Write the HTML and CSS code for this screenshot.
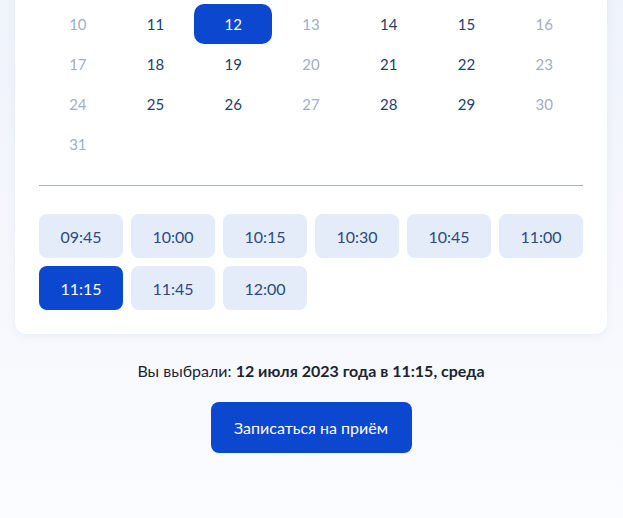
FILE: index.html
```html
<!DOCTYPE html>
<html lang="ru">
<head>
<meta charset="utf-8">
<link rel="stylesheet" href="styles.css">
</head>
<body>
<div class="page">
  <div class="card">
    <div class="days">
      <div class="day off">10</div>
      <div class="day">11</div>
      <div class="day selected">12</div>
      <div class="day off">13</div>
      <div class="day">14</div>
      <div class="day">15</div>
      <div class="day off">16</div>
      <div class="day off">17</div>
      <div class="day">18</div>
      <div class="day">19</div>
      <div class="day off">20</div>
      <div class="day">21</div>
      <div class="day">22</div>
      <div class="day off">23</div>
      <div class="day off">24</div>
      <div class="day">25</div>
      <div class="day">26</div>
      <div class="day off">27</div>
      <div class="day">28</div>
      <div class="day">29</div>
      <div class="day off">30</div>
      <div class="day off">31</div>
    </div>
    <div class="divider"></div>
    <div class="slots">
      <div class="slot">09:45</div>
      <div class="slot">10:00</div>
      <div class="slot">10:15</div>
      <div class="slot">10:30</div>
      <div class="slot">10:45</div>
      <div class="slot">11:00</div>
      <div class="slot active">11:15</div>
      <div class="slot">11:45</div>
      <div class="slot">12:00</div>
    </div>
  </div>
  <p class="summary">Вы выбрали: <b>12 июля 2023 года в 11:15, среда</b></p>
  <div class="actions"><button class="submit">Записаться на приём</button></div>
</div>
</body>
</html>
```
FILE: styles.css
```css
html, body {
  margin: 0;
  padding: 0;
}
body {
  font-family: Lato, "Noto Sans", sans-serif;
  background: linear-gradient(180deg, #eff3fb 0%, #f6f8fd 60%, #fbfcff 100%);
  min-height: 518px;
  overflow: hidden;
}
.page {
  padding: 0 16px 0 15px;
}
.card {
  background: #ffffff;
  margin-top: -20px;
  padding: 24px 24px 24px 24px;
  border-radius: 12px;
  box-shadow: 0 2px 8px rgba(80, 110, 170, 0.08);
}
.days {
  display: grid;
  grid-template-columns: repeat(7, 1fr);
  grid-auto-rows: 40px;
}
.day {
  display: flex;
  align-items: center;
  justify-content: center;
  font-size: 15px;
  color: #273d6d;
  border-radius: 10px;
}
.day.off {
  color: #a3aec2;
}
.day.selected {
  background: #0b47cf;
  color: #ffffff;
}
.divider {
  height: 1px;
  background: #a9b4c4;
  margin: 21px 0 28px;
}
.slots {
  display: grid;
  grid-template-columns: repeat(6, 1fr);
  grid-auto-rows: 44px;
  gap: 8px;
}
.slot {
  display: flex;
  align-items: center;
  justify-content: center;
  background: #e4ecfa;
  border-radius: 8px;
  font-size: 16px;
  color: #2c4a80;
}
.slot.active {
  background: #0b47cf;
  color: #ffffff;
}
.summary {
  margin: 26px 0 0;
  text-align: center;
  font-size: 16px;
  line-height: 22px;
  color: #1c2431;
}
.summary b {
  font-weight: 700;
}
.actions {
  display: flex;
  justify-content: center;
  margin-top: 20px;
}
.submit {
  width: 201px;
  height: 51px;
  border: none;
  border-radius: 8px;
  background: #0b47cf;
  color: #ffffff;
  font-family: Lato, "Noto Sans", sans-serif;
  font-size: 16px;
  font-weight: 400;
}
```
